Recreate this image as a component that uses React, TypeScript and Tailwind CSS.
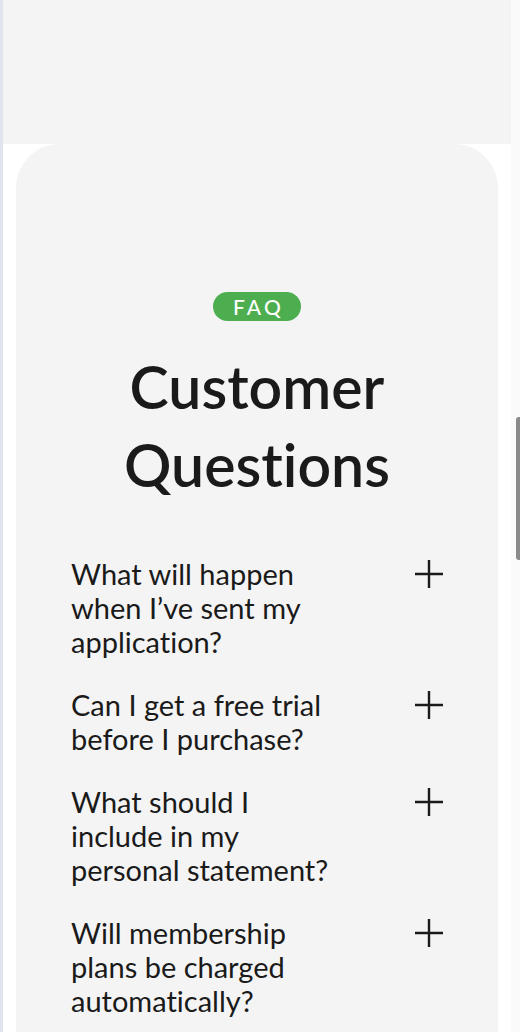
import { memo } from "react";

const questions = [
  "What will happen when I’ve sent my application?",
  "Can I get a free trial before I purchase?",
  "What should I include in my personal statement?",
  "Will membership plans be charged automatically?",
];

const PlusIcon = () => (
  <svg width="30" height="30" viewBox="0 0 30 30" className="shrink-0">
    <path d="M15 1v28M1 15h28" stroke="#1a1a1a" strokeWidth="2.4" />
  </svg>
);

const FaqItem = ({ text }: { text: string }) => (
  <div className="flex items-start justify-between gap-6">
    <p className="w-[266px] text-[29px] leading-[34px] text-[#1a1a1a]">{text}</p>
    <div className="-mr-[1px] mt-[2px]">
      <PlusIcon />
    </div>
  </div>
);

const App = () => {
  return (
    <div
      className="relative flex min-h-[1032px] border-l-[3px] border-[#e1e4ee] bg-white [font-variant-ligatures:none]"
      style={{ fontFamily: "Lato, 'Open Sans', sans-serif" }}
    >
      <div className="flex w-[508px] flex-col">
        <div className="h-[144px] bg-[#f4f4f4]" />
        <div className="mx-[13px] flex flex-1 flex-col items-center rounded-t-[44px] bg-[#f4f4f4] px-[55px] pt-[148px]">
          <span className="flex h-[29px] w-[88px] items-center justify-center rounded-full bg-[#4cae4f] pl-[3px] text-[21px] font-medium tracking-[0.15em] text-white">
            FAQ
          </span>
          <h2 className="mt-[27px] text-center text-[59px] leading-[78px] font-semibold text-[#1a1a1a]">
            Customer
            <br />
            Questions
          </h2>
          <div className="mt-[53px] flex w-full flex-col gap-[29px]">
            {questions.map((q) => (
              <FaqItem key={q} text={q} />
            ))}
          </div>
        </div>
      </div>
      <div className="w-[9px] bg-[#fafafa]" />
      <div className="absolute top-[417px] right-0 h-[143px] w-[4px] rounded-l-[3px] bg-[#8a8a8a]" />
    </div>
  );
};

export default memo(App);
